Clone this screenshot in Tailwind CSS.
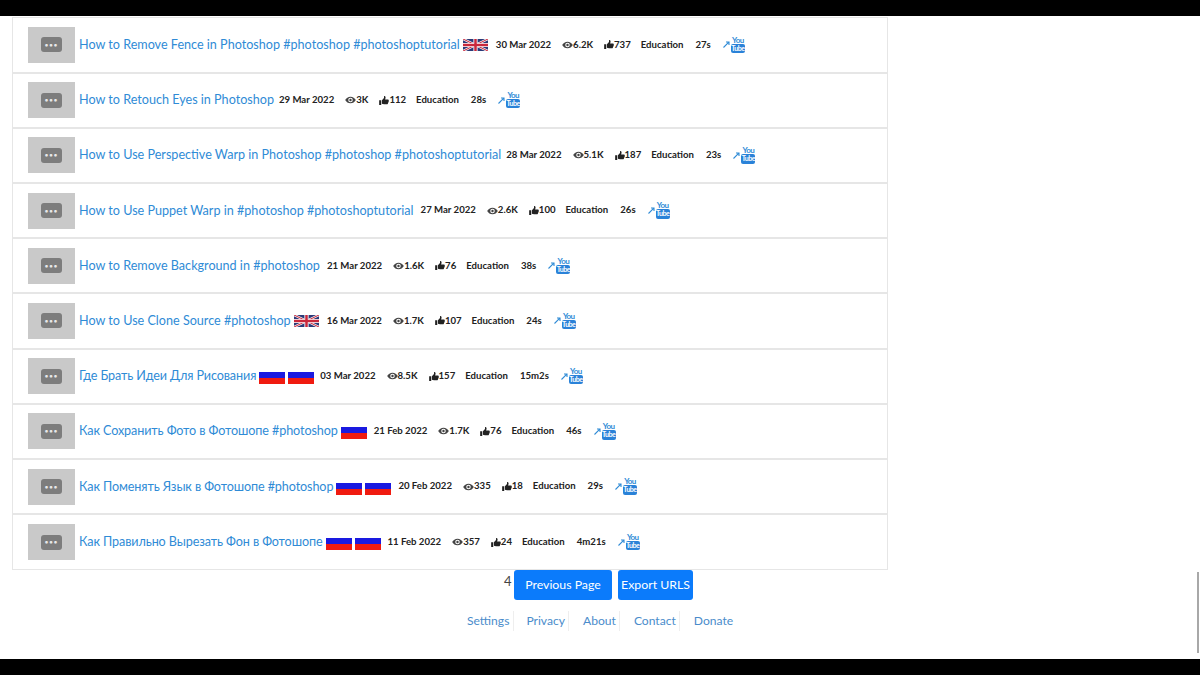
<!DOCTYPE html>
<html><head><meta charset="utf-8"><script src="https://cdn.jsdelivr.net/npm/@tailwindcss/browser@4"></script></head>
<body class="bg-black">
<svg class="hidden"><defs>
<symbol id="eye" viewBox="0 0 16 12"><path fill="#444" fill-rule="evenodd" d="M8 1C4.500 1 1.700 3 0 6c1.700 3 4.500 5 8 5s6.300-2 8-5c-1.700-3-4.500-5-8-5zm0 1.600a3.400 3.400 0 1 1 0 6.800 3.400 3.400 0 0 1 0-6.800zM8 4.200a1.800 1.800 0 1 0 0 3.600 1.800 1.800 0 0 0 0-3.600z"/></symbol>
<symbol id="thumb" viewBox="0 0 14 13"><path fill="#222" d="M0 6h3v7H0zM4 6.200 7 3V.6C7 0 8.800-.2 9.200 1.300c.3 1.300-.3 2.700-.6 3.700h4c1.200 0 1.600 1 1.200 1.800.3.800 0 1.400-.5 1.800.2.800-.1 1.300-.6 1.700.1.900-.4 1.700-1.300 1.700H7c-1.300 0-2-.6-3-.8z"/></symbol>
<symbol id="arrow" viewBox="0 0 7 7"><path fill="none" stroke="#2f8bd6" stroke-width="1.100" d="M.5 6.500 5.800 1.200M3 1h3v3"/></symbol>
<symbol id="uk" viewBox="0 0 60 30" preserveAspectRatio="none"><rect width="60" height="30" fill="#2b3a78"/><path stroke="#fff" stroke-width="6" d="M0 0 60 30M60 0 0 30"/><path stroke="#c8283c" stroke-width="2.500" d="M0 0 60 30M60 0 0 30"/><path stroke="#fff" stroke-width="10" d="M30 0V30M0 15H60"/><path stroke="#c8283c" stroke-width="6" d="M30 0V30M0 15H60"/></symbol>
</defs></svg>
<div class="flex h-[675px] w-[1200px] flex-col overflow-hidden font-['Lato','Open_Sans',sans-serif]">
<div class="h-4 shrink-0 bg-black"></div>
<main class="relative flex h-[643px] shrink-0 flex-col bg-white">
<div class="mt-px ml-3 w-[876px] border border-[#e6e6e6] text-[12.600px] text-[#2f8bd6]">

<div class="flex h-[55.6px] items-center border-b-2 border-[#e6e6e6] pl-[15px]">
<div class="mr-1 flex h-9 w-[47px] shrink-0 items-center justify-center bg-[#c9c9c9]"><div class="flex h-[15px] w-[21px] items-center justify-center rounded-[3px] bg-[#7d7d7d] text-[6px] leading-none font-bold tracking-[1px] text-[#e8e8e8]">•••</div></div>
<a class="pt-px whitespace-nowrap">How to Remove Fence in Photoshop #photoshop #photoshoptutorial</a>
<svg class="ml-[3px] h-3 w-[25px] shrink-0"><use href="#uk"/></svg>
<div class="ml-2 flex items-center whitespace-nowrap text-[9.600px] font-bold text-[#222]"><span>30 Mar 2022</span><svg class="ml-[11px] h-2 w-[11px]"><use href="#eye"/></svg><span>6.2K</span><svg class="ml-[11px] h-[9px] w-[10px]"><use href="#thumb"/></svg><span>737</span><span class="ml-[10px]">Education</span><span class="ml-[12px]">27s</span><svg class="ml-[12px] h-[7px] w-[7px] shrink-0"><use href="#arrow"/></svg>
<div class="ml-px flex w-[14px] flex-col items-center"><span class="text-[8px] leading-[7px] font-bold tracking-[-.6px] text-[#2f8bd6]">You</span><span class="w-[14px] rounded-[2px] bg-[#2a82d8] text-center text-[7px] leading-[9.500px] font-bold tracking-[-.5px] text-white">Tube</span></div></div>
</div>

<div class="flex h-[55.2px] items-center border-b-2 border-[#e6e6e6] pl-[15px]">
<div class="mr-1 flex h-9 w-[47px] shrink-0 items-center justify-center bg-[#c9c9c9]"><div class="flex h-[15px] w-[21px] items-center justify-center rounded-[3px] bg-[#7d7d7d] text-[6px] leading-none font-bold tracking-[1px] text-[#e8e8e8]">•••</div></div>
<a class="pt-px whitespace-nowrap">How to Retouch Eyes in Photoshop</a>
<div class="ml-[5px] flex items-center whitespace-nowrap text-[9.600px] font-bold text-[#222]"><span>29 Mar 2022</span><svg class="ml-[11px] h-2 w-[11px]"><use href="#eye"/></svg><span>3K</span><svg class="ml-[11px] h-[9px] w-[10px]"><use href="#thumb"/></svg><span>112</span><span class="ml-[10px]">Education</span><span class="ml-[12px]">28s</span><svg class="ml-[12px] h-[7px] w-[7px] shrink-0"><use href="#arrow"/></svg>
<div class="ml-px flex w-[14px] flex-col items-center"><span class="text-[8px] leading-[7px] font-bold tracking-[-.6px] text-[#2f8bd6]">You</span><span class="w-[14px] rounded-[2px] bg-[#2a82d8] text-center text-[7px] leading-[9.500px] font-bold tracking-[-.5px] text-white">Tube</span></div></div>
</div>

<div class="flex h-[55.2px] items-center border-b-2 border-[#e6e6e6] pl-[15px]">
<div class="mr-1 flex h-9 w-[47px] shrink-0 items-center justify-center bg-[#c9c9c9]"><div class="flex h-[15px] w-[21px] items-center justify-center rounded-[3px] bg-[#7d7d7d] text-[6px] leading-none font-bold tracking-[1px] text-[#e8e8e8]">•••</div></div>
<a class="pt-px whitespace-nowrap">How to Use Perspective Warp in Photoshop #photoshop #photoshoptutorial</a>
<div class="ml-[5px] flex items-center whitespace-nowrap text-[9.600px] font-bold text-[#222]"><span>28 Mar 2022</span><svg class="ml-[11px] h-2 w-[11px]"><use href="#eye"/></svg><span>5.1K</span><svg class="ml-[11px] h-[9px] w-[10px]"><use href="#thumb"/></svg><span>187</span><span class="ml-[10px]">Education</span><span class="ml-[12px]">23s</span><svg class="ml-[12px] h-[7px] w-[7px] shrink-0"><use href="#arrow"/></svg>
<div class="ml-px flex w-[14px] flex-col items-center"><span class="text-[8px] leading-[7px] font-bold tracking-[-.6px] text-[#2f8bd6]">You</span><span class="w-[14px] rounded-[2px] bg-[#2a82d8] text-center text-[7px] leading-[9.500px] font-bold tracking-[-.5px] text-white">Tube</span></div></div>
</div>

<div class="flex h-[55.2px] items-center border-b-2 border-[#e6e6e6] pl-[15px]">
<div class="mr-1 flex h-9 w-[47px] shrink-0 items-center justify-center bg-[#c9c9c9]"><div class="flex h-[15px] w-[21px] items-center justify-center rounded-[3px] bg-[#7d7d7d] text-[6px] leading-none font-bold tracking-[1px] text-[#e8e8e8]">•••</div></div>
<a class="pt-px whitespace-nowrap">How to Use Puppet Warp in #photoshop #photoshoptutorial</a>
<div class="ml-[7px] flex items-center whitespace-nowrap text-[9.600px] font-bold text-[#222]"><span>27 Mar 2022</span><svg class="ml-[11px] h-2 w-[11px]"><use href="#eye"/></svg><span>2.6K</span><svg class="ml-[11px] h-[9px] w-[10px]"><use href="#thumb"/></svg><span>100</span><span class="ml-[10px]">Education</span><span class="ml-[12px]">26s</span><svg class="ml-[12px] h-[7px] w-[7px] shrink-0"><use href="#arrow"/></svg>
<div class="ml-px flex w-[14px] flex-col items-center"><span class="text-[8px] leading-[7px] font-bold tracking-[-.6px] text-[#2f8bd6]">You</span><span class="w-[14px] rounded-[2px] bg-[#2a82d8] text-center text-[7px] leading-[9.500px] font-bold tracking-[-.5px] text-white">Tube</span></div></div>
</div>

<div class="flex h-[55.2px] items-center border-b-2 border-[#e6e6e6] pl-[15px]">
<div class="mr-1 flex h-9 w-[47px] shrink-0 items-center justify-center bg-[#c9c9c9]"><div class="flex h-[15px] w-[21px] items-center justify-center rounded-[3px] bg-[#7d7d7d] text-[6px] leading-none font-bold tracking-[1px] text-[#e8e8e8]">•••</div></div>
<a class="pt-px whitespace-nowrap">How to Remove Background in #photoshop</a>
<div class="ml-[7px] flex items-center whitespace-nowrap text-[9.600px] font-bold text-[#222]"><span>21 Mar 2022</span><svg class="ml-[11px] h-2 w-[11px]"><use href="#eye"/></svg><span>1.6K</span><svg class="ml-[11px] h-[9px] w-[10px]"><use href="#thumb"/></svg><span>76</span><span class="ml-[10px]">Education</span><span class="ml-[12px]">38s</span><svg class="ml-[12px] h-[7px] w-[7px] shrink-0"><use href="#arrow"/></svg>
<div class="ml-px flex w-[14px] flex-col items-center"><span class="text-[8px] leading-[7px] font-bold tracking-[-.6px] text-[#2f8bd6]">You</span><span class="w-[14px] rounded-[2px] bg-[#2a82d8] text-center text-[7px] leading-[9.500px] font-bold tracking-[-.5px] text-white">Tube</span></div></div>
</div>

<div class="flex h-[55.2px] items-center border-b-2 border-[#e6e6e6] pl-[15px]">
<div class="mr-1 flex h-9 w-[47px] shrink-0 items-center justify-center bg-[#c9c9c9]"><div class="flex h-[15px] w-[21px] items-center justify-center rounded-[3px] bg-[#7d7d7d] text-[6px] leading-none font-bold tracking-[1px] text-[#e8e8e8]">•••</div></div>
<a class="pt-px whitespace-nowrap">How to Use Clone Source #photoshop</a>
<svg class="ml-[3px] h-3 w-[25px] shrink-0"><use href="#uk"/></svg>
<div class="ml-2 flex items-center whitespace-nowrap text-[9.600px] font-bold text-[#222]"><span>16 Mar 2022</span><svg class="ml-[11px] h-2 w-[11px]"><use href="#eye"/></svg><span>1.7K</span><svg class="ml-[11px] h-[9px] w-[10px]"><use href="#thumb"/></svg><span>107</span><span class="ml-[10px]">Education</span><span class="ml-[12px]">24s</span><svg class="ml-[12px] h-[7px] w-[7px] shrink-0"><use href="#arrow"/></svg>
<div class="ml-px flex w-[14px] flex-col items-center"><span class="text-[8px] leading-[7px] font-bold tracking-[-.6px] text-[#2f8bd6]">You</span><span class="w-[14px] rounded-[2px] bg-[#2a82d8] text-center text-[7px] leading-[9.500px] font-bold tracking-[-.5px] text-white">Tube</span></div></div>
</div>

<div class="flex h-[55.2px] items-center border-b-2 border-[#e6e6e6] pl-[15px]">
<div class="mr-1 flex h-9 w-[47px] shrink-0 items-center justify-center bg-[#c9c9c9]"><div class="flex h-[15px] w-[21px] items-center justify-center rounded-[3px] bg-[#7d7d7d] text-[6px] leading-none font-bold tracking-[1px] text-[#e8e8e8]">•••</div></div>
<a class="pt-px tracking-[-.1px] whitespace-nowrap">Где Брать Идеи Для Рисования</a>
<div class="mt-1 ml-[3px] h-3 w-[26px] shrink-0 bg-[linear-gradient(#fff_0_4%,#1a1ae0_4%_50%,#f01b10_50%)]"></div><div class="mt-1 ml-[3px] h-3 w-[26px] shrink-0 bg-[linear-gradient(#fff_0_4%,#1a1ae0_4%_50%,#f01b10_50%)]"></div>
<div class="ml-[6px] flex items-center whitespace-nowrap text-[9.600px] font-bold text-[#222]"><span>03 Mar 2022</span><svg class="ml-[11px] h-2 w-[11px]"><use href="#eye"/></svg><span>8.5K</span><svg class="ml-[11px] h-[9px] w-[10px]"><use href="#thumb"/></svg><span>157</span><span class="ml-[10px]">Education</span><span class="ml-[12px]">15m2s</span><svg class="ml-[12px] h-[7px] w-[7px] shrink-0"><use href="#arrow"/></svg>
<div class="ml-px flex w-[14px] flex-col items-center"><span class="text-[8px] leading-[7px] font-bold tracking-[-.6px] text-[#2f8bd6]">You</span><span class="w-[14px] rounded-[2px] bg-[#2a82d8] text-center text-[7px] leading-[9.500px] font-bold tracking-[-.5px] text-white">Tube</span></div></div>
</div>

<div class="flex h-[55.2px] items-center border-b-2 border-[#e6e6e6] pl-[15px]">
<div class="mr-1 flex h-9 w-[47px] shrink-0 items-center justify-center bg-[#c9c9c9]"><div class="flex h-[15px] w-[21px] items-center justify-center rounded-[3px] bg-[#7d7d7d] text-[6px] leading-none font-bold tracking-[1px] text-[#e8e8e8]">•••</div></div>
<a class="pt-px tracking-[-.1px] whitespace-nowrap">Как Сохранить Фото в Фотошопе #photoshop</a>
<div class="mt-1 ml-[3px] h-3 w-[26px] shrink-0 bg-[linear-gradient(#fff_0_4%,#1a1ae0_4%_50%,#f01b10_50%)]"></div>
<div class="ml-[7px] flex items-center whitespace-nowrap text-[9.600px] font-bold text-[#222]"><span>21 Feb 2022</span><svg class="ml-[11px] h-2 w-[11px]"><use href="#eye"/></svg><span>1.7K</span><svg class="ml-[11px] h-[9px] w-[10px]"><use href="#thumb"/></svg><span>76</span><span class="ml-[10px]">Education</span><span class="ml-[12px]">46s</span><svg class="ml-[12px] h-[7px] w-[7px] shrink-0"><use href="#arrow"/></svg>
<div class="ml-px flex w-[14px] flex-col items-center"><span class="text-[8px] leading-[7px] font-bold tracking-[-.6px] text-[#2f8bd6]">You</span><span class="w-[14px] rounded-[2px] bg-[#2a82d8] text-center text-[7px] leading-[9.500px] font-bold tracking-[-.5px] text-white">Tube</span></div></div>
</div>

<div class="flex h-[55.2px] items-center border-b-2 border-[#e6e6e6] pl-[15px]">
<div class="mr-1 flex h-9 w-[47px] shrink-0 items-center justify-center bg-[#c9c9c9]"><div class="flex h-[15px] w-[21px] items-center justify-center rounded-[3px] bg-[#7d7d7d] text-[6px] leading-none font-bold tracking-[1px] text-[#e8e8e8]">•••</div></div>
<a class="pt-px tracking-[-.1px] whitespace-nowrap">Как Поменять Язык в Фотошопе #photoshop</a>
<div class="mt-1 ml-[3px] h-3 w-[26px] shrink-0 bg-[linear-gradient(#fff_0_4%,#1a1ae0_4%_50%,#f01b10_50%)]"></div><div class="mt-1 ml-[3px] h-3 w-[26px] shrink-0 bg-[linear-gradient(#fff_0_4%,#1a1ae0_4%_50%,#f01b10_50%)]"></div>
<div class="ml-[7px] flex items-center whitespace-nowrap text-[9.600px] font-bold text-[#222]"><span>20 Feb 2022</span><svg class="ml-[11px] h-2 w-[11px]"><use href="#eye"/></svg><span>335</span><svg class="ml-[11px] h-[9px] w-[10px]"><use href="#thumb"/></svg><span>18</span><span class="ml-[10px]">Education</span><span class="ml-[12px]">29s</span><svg class="ml-[12px] h-[7px] w-[7px] shrink-0"><use href="#arrow"/></svg>
<div class="ml-px flex w-[14px] flex-col items-center"><span class="text-[8px] leading-[7px] font-bold tracking-[-.6px] text-[#2f8bd6]">You</span><span class="w-[14px] rounded-[2px] bg-[#2a82d8] text-center text-[7px] leading-[9.500px] font-bold tracking-[-.5px] text-white">Tube</span></div></div>
</div>

<div class="flex h-[54px] items-center pl-[15px]">
<div class="mr-1 flex h-9 w-[47px] shrink-0 items-center justify-center bg-[#c9c9c9]"><div class="flex h-[15px] w-[21px] items-center justify-center rounded-[3px] bg-[#7d7d7d] text-[6px] leading-none font-bold tracking-[1px] text-[#e8e8e8]">•••</div></div>
<a class="pt-px tracking-[-.1px] whitespace-nowrap">Как Правильно Вырезать Фон в Фотошопе</a>
<div class="mt-1 ml-[3px] h-3 w-[26px] shrink-0 bg-[linear-gradient(#fff_0_4%,#1a1ae0_4%_50%,#f01b10_50%)]"></div><div class="mt-1 ml-[3px] h-3 w-[26px] shrink-0 bg-[linear-gradient(#fff_0_4%,#1a1ae0_4%_50%,#f01b10_50%)]"></div>
<div class="ml-[7px] flex items-center whitespace-nowrap text-[9.600px] font-bold text-[#222]"><span>11 Feb 2022</span><svg class="ml-[11px] h-2 w-[11px]"><use href="#eye"/></svg><span>357</span><svg class="ml-[11px] h-[9px] w-[10px]"><use href="#thumb"/></svg><span>24</span><span class="ml-[10px]">Education</span><span class="ml-[12px]">4m21s</span><svg class="ml-[12px] h-[7px] w-[7px] shrink-0"><use href="#arrow"/></svg>
<div class="ml-px flex w-[14px] flex-col items-center"><span class="text-[8px] leading-[7px] font-bold tracking-[-.6px] text-[#2f8bd6]">You</span><span class="w-[14px] rounded-[2px] bg-[#2a82d8] text-center text-[7px] leading-[9.500px] font-bold tracking-[-.5px] text-white">Tube</span></div></div>
</div>
</div>

<div class="ml-[504px] flex items-start">
<span class="mt-[3px] w-[10px] text-[13px] leading-[16px] text-[#444]">4</span>
<button class="h-[30px] w-[98px] rounded-[3px] bg-[#0b7bfb] pt-px text-[12.300px] text-white">Previous Page</button>
<button class="ml-[6px] h-[30px] w-[75px] rounded-[3px] bg-[#0b7bfb] pt-px text-[12.300px] text-white">Export URLS</button>
</div>
<nav class="mt-[11px] ml-[467px] flex items-center text-[12.100px] leading-[20px] text-[#4a8ccb]">
<a class="border-r border-[#eee] pr-1">Settings</a><a class="ml-3 border-r border-[#eee] pr-[3px]">Privacy</a><a class="ml-[14px] border-r border-[#eee] pr-[3px]">About</a><a class="ml-[14px] border-r border-[#eee] pr-[3px]">Contact</a><a class="ml-[14px]">Donate</a>
</nav>
<div class="absolute top-[556px] right-[1px] h-[81px] w-[2px] bg-[#a8a8a8]"></div>
</main>
<div class="grow bg-black"></div>
</div>
</body></html>
